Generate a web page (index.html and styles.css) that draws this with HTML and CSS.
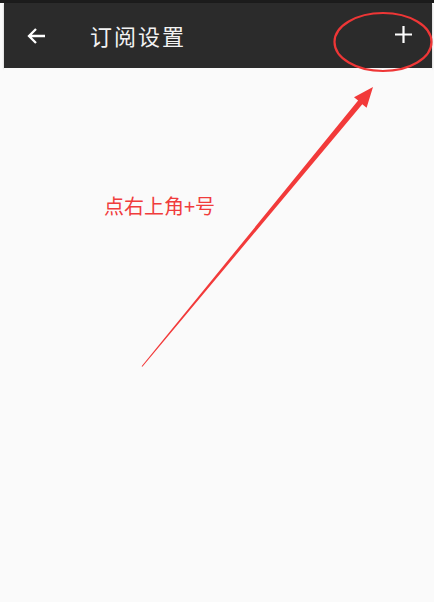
FILE: index.html
```
<!DOCTYPE html>
<html lang="zh">
<head>
<meta charset="utf-8">
<link rel="stylesheet" href="styles.css">
</head>
<body>
<div class="page">
  <div class="status"></div>
  <header class="appbar">
    <button class="icon-btn back" aria-label="返回">
      <svg width="20" height="20" viewBox="0 0 20 20"><path d="M19 10H3M10 3L3 10L10 17" fill="none" stroke="#fff" stroke-width="2.3"/></svg>
    </button>
    <h1 class="title">订阅设置</h1>
    <button class="icon-btn add" aria-label="添加">
      <svg width="17" height="17" viewBox="0 0 17 17"><path d="M8.5 0V17M0 8.5H17" fill="none" stroke="#fff" stroke-width="2.2"/></svg>
    </button>
  </header>
  <main class="content"></main>
  <p class="note">点右上角+号</p>
  <svg class="annot" width="434" height="602" viewBox="0 0 434 602">
    <ellipse cx="383" cy="42" rx="48.5" ry="29" fill="none" stroke="#ee3636" stroke-width="2.2"/>
    <polygon points="141.6,366.3 142.4,366.7 362.3,104.2 366.6,107.7 373,87 354,97.3 358.1,100.6" fill="#f23a3a"/>
  </svg>
</div>
</body>
</html>
```
FILE: styles.css
```
html, body { margin: 0; padding: 0; }
body {
  background: #fafafa;
  font-family: "Noto Sans CJK SC", "Noto Sans", sans-serif;
  width: 434px;
  height: 602px;
  overflow: hidden;
}
.page { position: relative; width: 434px; height: 602px; display: flex; flex-direction: column; }
.status { height: 3px; background: #1c1c1c; }
.appbar {
  height: 65px;
  box-sizing: border-box;
  padding: 0 14px 2px 22px;
  background: #2b2b2b;
  display: flex;
  align-items: center;
  margin: 0 2px 0 4px;
  box-shadow: 0 1px 2px rgba(0,0,0,0.25);
}
.icon-btn { background: none; border: 0; padding: 0; display: flex; align-items: center; justify-content: center; }
.back { width: 20px; height: 20px; margin-top: 2px; }
.title {
  margin: 0 0 0 44px;
  flex: 1;
  font-size: 22px;
  font-weight: 400;
  color: #f2f2f2;
  letter-spacing: 2px;
}
.add { width: 17px; height: 17px; margin-right: 6px; }
.content { flex: 1; background: #fafafa; margin: 0 2px 0 4px; }
.note {
  position: absolute;
  left: 104px;
  top: 191px;
  margin: 0;
  font-size: 20px;
  color: #f03c3c;
}
.annot { position: absolute; left: 0; top: 0; pointer-events: none; }
```
